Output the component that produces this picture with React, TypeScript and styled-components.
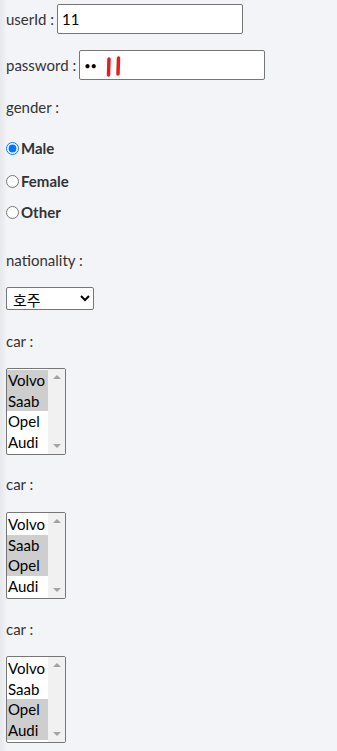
import React from "react";
import styled, { createGlobalStyle } from "styled-components";

const GlobalStyle = createGlobalStyle`
  html, body {
    margin: 0;
    padding: 0;
    background: #f3f4f8;
  }
  body {
    font-family: "Source Sans Pro", Lato, "Noto Sans", sans-serif;
    color: #333;
    font-size: 15px;
  }
`;

const Page = styled.div`
  min-height: 751px;
  padding: 4px 6px;
  box-sizing: border-box;
  background: linear-gradient(to right, #e6e7eb 0px, #f3f4f8 7px);
`;

const Row = styled.div<{ $mt?: number }>`
  display: flex;
  align-items: center;
  gap: 3px;
  margin-top: ${({ $mt }) => $mt ?? 0}px;
`;

const Label = styled.label<{ $mt?: number }>`
  display: block;
  line-height: 20px;
  margin-top: ${({ $mt }) => $mt ?? 0}px;
`;

const FieldWrap = styled.div`
  position: relative;
`;

const TextInput = styled.input<{ $small?: boolean }>`
  width: 186px;
  height: 30px;
  box-sizing: border-box;
  border: 1px solid #767676;
  border-radius: 2px;
  padding: 0 4px;
  font-family: "Source Sans Pro", Lato, "Noto Sans", sans-serif;
  font-size: ${({ $small }) => ($small ? 11 : 15)}px;
  color: #000;
  background: #fff;
  outline: none;
`;

const Scribble = styled.svg`
  position: absolute;
  left: 26px;
  top: 6px;
  pointer-events: none;
`;

const RadioRow = styled.label<{ $mt: number }>`
  display: flex;
  align-items: center;
  gap: 2px;
  margin-top: ${({ $mt }) => $mt}px;
  font-weight: 700;
  line-height: 20px;
`;

const Radio = styled.input`
  margin: 0;
  width: 13px;
  height: 13px;
`;

const Select = styled.select`
  margin-top: 17px;
  width: 88px;
  height: 23px;
  border: 1px solid #767676;
  border-radius: 2px;
  background: #fff;
  color: #000;
  font-family: "Noto Sans CJK KR", sans-serif;
  font-size: 15px;
  padding: 0 2px;
`;

const ListBox = styled.div<{ $mt: number }>`
  display: flex;
  width: 60px;
  height: 87px;
  box-sizing: border-box;
  border: 1px solid #767676;
  border-radius: 2px;
  background: #fff;
  margin-top: ${({ $mt }) => $mt}px;
  overflow: hidden;
`;

const Options = styled.div`
  flex: 1;
  display: flex;
  flex-direction: column;
  padding-top: 1px;
`;

const Option = styled.div<{ $selected: boolean }>`
  height: 20.5px;
  line-height: 20.5px;
  padding-left: 1px;
  font-size: 15px;
  color: #000;
  background: ${({ $selected }) => ($selected ? "#cecece" : "#fff")};
`;

const ScrollBar = styled.div`
  width: 17px;
  background: #f1f1f1;
  display: flex;
  flex-direction: column;
  justify-content: space-between;
  align-items: center;
  padding: 6px 0;
`;

const Arrow = styled.div<{ $up?: boolean }>`
  width: 0;
  height: 0;
  border-left: 4px solid transparent;
  border-right: 4px solid transparent;
  ${({ $up }) =>
    $up ? "border-bottom: 4px solid #a3a3a3;" : "border-top: 4px solid #a3a3a3;"}
`;

const cars = ["Volvo", "Saab", "Opel", "Audi"];

const CarList = ({ selected, mt }: { selected: string[]; mt: number }) => (
  <ListBox $mt={mt}>
    <Options>
      {cars.map((c) => (
        <Option key={c} $selected={selected.includes(c)}>
          {c}
        </Option>
      ))}
    </Options>
    <ScrollBar>
      <Arrow $up />
      <Arrow />
    </ScrollBar>
  </ListBox>
);

export default function App() {
  return (
    <>
      <GlobalStyle />
      <Page>
        <Row>
          <span>userId :</span>
          <TextInput type="text" defaultValue="11" />
        </Row>
        <Row $mt={16}>
          <span>password :</span>
          <FieldWrap>
            <TextInput type="password" defaultValue="11" $small />
            <Scribble width="20" height="22" viewBox="0 0 20 22">
              <path d="M4 3 L3.5 19" stroke="#e02020" strokeWidth="3.5" strokeLinecap="round" />
              <path d="M13.5 2 L13 18" stroke="#e02020" strokeWidth="3.5" strokeLinecap="round" />
            </Scribble>
          </FieldWrap>
        </Row>
        <Label $mt={17}>gender :</Label>
        <RadioRow $mt={21}>
          <Radio type="radio" name="gender" defaultChecked />
          Male
        </RadioRow>
        <RadioRow $mt={13}>
          <Radio type="radio" name="gender" />
          Female
        </RadioRow>
        <RadioRow $mt={11}>
          <Radio type="radio" name="gender" />
          Other
        </RadioRow>
        <Label $mt={28}>nationality :</Label>
        <Select defaultValue="au">
          <option value="au">호주</option>
          <option value="kr">한국</option>
        </Select>
        <Label $mt={21}>car :</Label>
        <CarList selected={["Volvo", "Saab"]} mt={17} />
        <Label $mt={19}>car :</Label>
        <CarList selected={["Saab", "Opel"]} mt={18} />
        <Label $mt={20}>car :</Label>
        <CarList selected={["Opel", "Audi"]} mt={17} />
      </Page>
    </>
  );
}
